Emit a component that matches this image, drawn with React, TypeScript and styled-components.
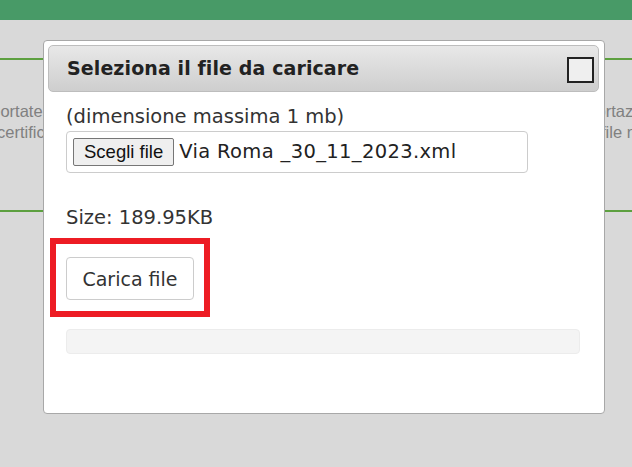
import React from "react";
import styled, { createGlobalStyle } from "styled-components";

const GlobalStyle = createGlobalStyle`
  html, body {
    margin: 0;
    padding: 0;
    background: #d9d9d9;
    overflow: hidden;
  }
  body {
    font-family: "DejaVu Sans", Verdana, sans-serif;
  }
`;

const Page = styled.div`
  position: relative;
  width: 632px;
  height: 467px;
  background: #d9d9d9;
  overflow: hidden;
`;

const TopBar = styled.div`
  height: 20px;
  background: #489a67;
`;

const Section = styled.div`
  margin-top: 38px;
  height: 150px;
  border-top: 2px solid #5da040;
  border-bottom: 2px solid #5da040;
  display: flex;
  font-family: "Liberation Sans", Arial, sans-serif;
  font-size: 16.5px;
  line-height: 21px;
  color: #808080;
  white-space: nowrap;
`;

const Column = styled.div<{ $offset: number; $width?: number }>`
  padding-top: 41px;
  margin-left: ${(p) => p.$offset}px;
  width: ${(p) => (p.$width ? `${p.$width}px` : "auto")};
  flex-shrink: 0;
`;

const BgLine = styled.div<{ $indent?: number }>`
  margin-left: ${(p) => p.$indent ?? 0}px;
`;

const Dialog = styled.div`
  position: absolute;
  left: 43px;
  top: 40px;
  width: 562px;
  height: 374px;
  padding: 4px;
  box-sizing: border-box;
  background: #fff;
  border: 1px solid #a8a8a8;
  border-radius: 4px;
  display: flex;
  flex-direction: column;
`;

const Header = styled.div`
  height: 47px;
  box-sizing: border-box;
  margin-right: 1px;
  border: 1px solid #bdbdbd;
  border-radius: 5px;
  background: linear-gradient(#e8e8e8, #cecece);
  display: flex;
  align-items: center;
  justify-content: space-between;
  padding: 0 4px 0 18px;
`;

const Title = styled.span`
  font-weight: bold;
  font-size: 19px;
  letter-spacing: 0.1px;
  color: #222;
  padding-bottom: 1px;
`;

const CloseBox = styled.button`
  width: 27px;
  height: 26px;
  box-sizing: border-box;
  border: 2px solid #222;
  background: #efefef;
  padding: 0;
  margin-top: 2px;
`;

const Body = styled.div`
  padding: 13px 18px 0;
  color: #333;
  font-size: 19.5px;
  line-height: 24px;
`;

const FileBox = styled.div`
  margin-top: 2px;
  width: 462px;
  height: 42px;
  box-sizing: border-box;
  border: 1px solid #cccccc;
  border-radius: 4px;
  display: flex;
  align-items: center;
  padding-left: 6px;
  gap: 5px;
`;

const ChooseButton = styled.span`
  height: 28px;
  box-sizing: border-box;
  padding: 0 10px;
  border: 1px solid #767676;
  border-radius: 2px;
  background: #efefef;
  font-family: "Liberation Sans", Arial, sans-serif;
  font-size: 18.5px;
  line-height: 26px;
  color: #111;
`;

const FileName = styled.span`
  color: #222;
  letter-spacing: 0.35px;
`;

const SizeText = styled.div`
  margin-top: 33px;
`;

const Highlight = styled.div`
  margin-top: 8px;
  margin-left: -16px;
  width: fit-content;
  border: 6px solid #ed1c24;
  padding: 13px 10px 11px;
`;

const UploadButton = styled.button`
  width: 128px;
  height: 43px;
  border: 1px solid #cccccc;
  border-radius: 4px;
  background: #fff;
  font-family: "DejaVu Sans", Verdana, sans-serif;
  font-size: 19px;
  color: #333;
  padding: 0;
`;

const Progress = styled.div`
  margin-top: 12px;
  width: 514px;
  height: 25px;
  box-sizing: border-box;
  border: 1px solid #ececec;
  border-radius: 4px;
  background: #f4f4f4;
`;

export default function App() {
  return (
    <Page>
      <GlobalStyle />
      <TopBar />
      <Section>
        <Column $offset={-28} $width={597}>
          <BgLine>Esportate nel sistema</BgLine>
          <BgLine $indent={25}>certificati caricati</BgLine>
        </Column>
        <Column $offset={0}>
          <BgLine>Importazione in corso</BgLine>
          <BgLine $indent={32}>file non valido</BgLine>
        </Column>
      </Section>
      <Dialog>
        <Header>
          <Title>Seleziona il file da caricare</Title>
          <CloseBox aria-label="chiudi" />
        </Header>
        <Body>
          <div>(dimensione massima 1 mb)</div>
          <FileBox>
            <ChooseButton>Scegli file</ChooseButton>
            <FileName>Via Roma _30_11_2023.xml</FileName>
          </FileBox>
          <SizeText>Size: 189.95KB</SizeText>
          <Highlight>
            <UploadButton>Carica file</UploadButton>
          </Highlight>
          <Progress />
        </Body>
      </Dialog>
    </Page>
  );
}
